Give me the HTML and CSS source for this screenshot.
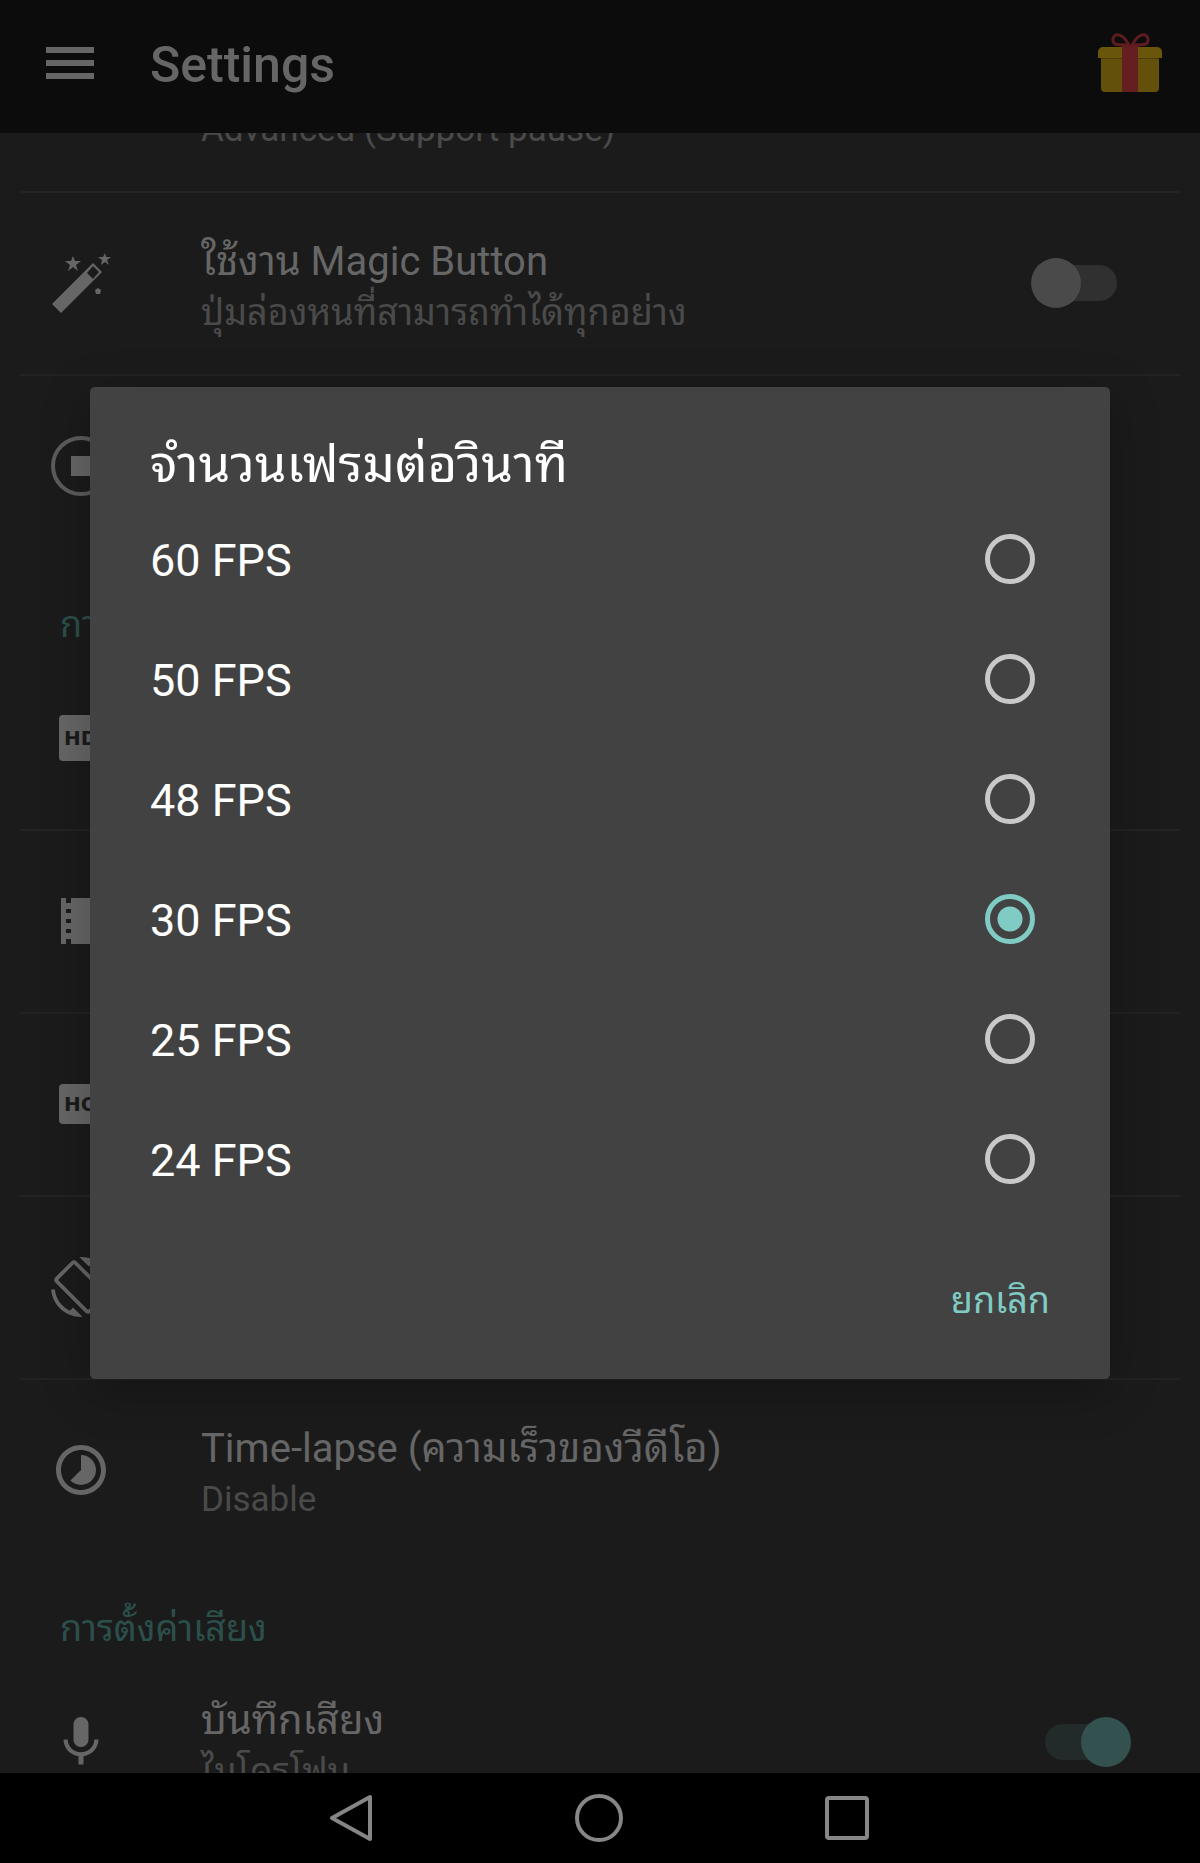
FILE: index.html
```html
<!DOCTYPE html>
<html lang="th">
<head>
<meta charset="utf-8">
<meta name="viewport" content="width=device-width, initial-scale=1">
<title>Settings</title>
<link rel="stylesheet" href="styles.css">
</head>
<body>
<div class="app">
  <header class="app-bar">
    <button class="icon-button" type="button" aria-label="Menu">
      <svg class="icon" viewBox="0 0 60 60"><path d="M6 12h48v6H6zM6 25h48v6H6zM6 38h48v6H6z"/></svg>
    </button>
    <h1 class="app-title">Settings</h1>
    <button class="icon-button gift" type="button" aria-label="Gift">
      <svg class="gift-icon" viewBox="0 0 64 64">
        <g fill="none" stroke="#5e1c1e" stroke-width="3"><path d="M31 12C27 5 22 1 18 2c-4 2-4 7-1 9 3 1 9 1 14 1z"/><path d="M34 12C38 5 43 1 47 2c4 2 4 7 1 9-3 1-9 1-14 1z"/></g>
        <path fill="#63500a" d="M3 24h58v31a4 4 0 0 1-4 4H7a4 4 0 0 1-4-4z"/>
        <path fill="#6a560b" d="M5 14h54a5 5 0 0 1 5 5v6H0v-6a5 5 0 0 1 5-5z"/>
        <path fill="#4b3c08" d="M3 25h58v1H3z"/>
        <path fill="#651f21" d="M24 13h16v46H24z"/>
      </svg>
    </button>
  </header>

  <main class="content">
    <div class="list">
      <div class="row">
        <div class="row-icon"></div>
        <div class="row-text"><span class="row-title"></span><span class="row-summary">Advanced (Support pause)</span></div>
      </div>
      <div class="row">
        <div class="row-icon">
          <svg class="icon" viewBox="0 0 60 60">
            <path d="M42 10l9 9L10 60l-9-9z"/>
            <path fill="#1b1b1b" d="M42 13l6 6-6 7-6-6z"/>
            <path d="M22 3l2 5h6l-5 4 2 6-5-4-5 4 2-6-5-4h6zM54 0l1 4h5l-4 3 2 5-4-3-4 3 1-5-4-3h5zM47 35l3 2-1 4h-4l-1-4z"/>
          </svg>
        </div>
        <label class="row-text" for="magic"><span class="row-title">ใช้งาน Magic Button</span><span class="row-summary thai">ปุ่มล่องหนที่สามารถทำได้ทุกอย่าง</span></label>
        <input class="switch" type="checkbox" role="switch" id="magic">
      </div>
      <div class="row">
        <div class="row-icon">
          <svg class="icon" viewBox="0 0 60 60"><circle cx="30" cy="30" r="28" fill="none" stroke="#5c5c5c" stroke-width="4"/><path d="M20 20h20v20H20z"/></svg>
        </div>
      </div>

      <h2 class="section">การตั้งค่าวีดีโอ</h2>
      <div class="row">
        <div class="row-icon">
          <svg class="icon" viewBox="0 0 60 60"><rect x="8" y="7" width="45" height="46" rx="4"/><text class="badge-text" x="13" y="37">HD</text></svg>
        </div>
      </div>
      <div class="row">
        <div class="row-icon">
          <svg class="icon" viewBox="0 0 60 60"><path d="M10 7h40v46H10z"/><path fill="#1b1b1b" d="M15 7h5v5h-5zM15 18h5v4h-5zM15 28h5v4h-5zM15 38h5v4h-5zM15 48h5v5h-5zM40 7h5v5h-5zM40 18h5v4h-5zM40 28h5v4h-5zM40 38h5v4h-5zM40 48h5v5h-5z"/></svg>
        </div>
      </div>
      <div class="row">
        <div class="row-icon">
          <svg class="icon" viewBox="0 0 60 60"><rect x="8" y="10" width="45" height="40" rx="4"/><text class="badge-text" x="13" y="37">HQ</text></svg>
        </div>
      </div>
      <div class="row">
        <div class="row-icon">
          <svg class="icon" viewBox="0 0 24 24"><path d="M16.48 2.52c3.27 1.55 5.61 4.72 5.97 8.48h1.5C23.44 4.84 18.29 0 12 0l-.66.03 3.81 3.81 1.33-1.32zm-6.25-.77c-.59-.59-1.54-.59-2.12 0L1.75 8.11c-.59.59-.59 1.54 0 2.12l12.02 12.02c.59.59 1.54.59 2.12 0l6.36-6.36c.59-.59.59-1.54 0-2.12L10.23 1.75zm4.6 19.44L2.81 9.17l6.36-6.36 12.02 12.02-6.36 6.36zm-7.31.29C4.25 19.94 1.91 16.76 1.55 13H.05C.56 19.16 5.71 24 12 24l.66-.03-3.81-3.81-1.33 1.32z"/></svg>
        </div>
      </div>
      <div class="row">
        <div class="row-icon">
          <svg class="icon" viewBox="0 0 24 24"><path d="M16.24 7.76C15.07 6.59 13.54 6 12 6v6l-4.24 4.24c2.34 2.34 6.14 2.34 8.49 0 2.34-2.34 2.34-6.14-.01-8.48zM12 2C6.48 2 2 6.48 2 12s4.48 10 10 10 10-4.48 10-10S17.52 2 12 2zm0 18c-4.42 0-8-3.58-8-8s3.58-8 8-8 8 3.58 8 8-3.58 8-8 8z"/></svg>
        </div>
        <div class="row-text"><span class="row-title">Time-lapse (ความเร็วของวีดีโอ)</span><span class="row-summary">Disable</span></div>
      </div>

      <h2 class="section">การตั้งค่าเสียง</h2>
      <div class="row">
        <div class="row-icon">
          <svg class="icon" viewBox="0 0 24 24"><path d="M12 14c1.66 0 2.99-1.34 2.99-3L15 5c0-1.66-1.34-3-3-3S9 3.34 9 5v6c0 1.66 1.34 3 3 3zm5.3-3c0 3-2.54 5.1-5.3 5.1S6.7 14 6.7 11H5c0 3.41 2.72 6.23 6 6.72V21h2v-3.28c3.28-.48 6-3.3 6-6.72h-1.7z"/></svg>
        </div>
        <label class="row-text" for="audio"><span class="row-title">บันทึกเสียง</span><span class="row-summary thai">ไมโครโฟน</span></label>
        <input class="switch" type="checkbox" role="switch" id="audio" checked>
      </div>
    </div>
  </main>

  <div class="overlay">
    <form class="dialog" role="dialog" aria-modal="true" aria-labelledby="fps-title">
      <h2 class="dialog-title" id="fps-title">จำนวนเฟรมต่อวินาที</h2>
      <label class="option"><span class="option-text">60 FPS</span><input class="radio" type="radio" name="fps" value="60"></label>
      <label class="option"><span class="option-text">50 FPS</span><input class="radio" type="radio" name="fps" value="50"></label>
      <label class="option"><span class="option-text">48 FPS</span><input class="radio" type="radio" name="fps" value="48"></label>
      <label class="option"><span class="option-text">30 FPS</span><input class="radio" type="radio" name="fps" value="30" checked></label>
      <label class="option"><span class="option-text">25 FPS</span><input class="radio" type="radio" name="fps" value="25"></label>
      <label class="option"><span class="option-text">24 FPS</span><input class="radio" type="radio" name="fps" value="24"></label>
      <div class="dialog-actions"><button class="text-button" type="button">ยกเลิก</button></div>
    </form>
  </div>
</div>

<nav class="nav-bar" aria-label="System">
  <button class="nav-button" type="button" aria-label="Back"><svg class="nav-icon" viewBox="0 0 50 50"><path d="M43 4v42L5 25z"/></svg></button>
  <button class="nav-button" type="button" aria-label="Home"><svg class="nav-icon" viewBox="0 0 50 50"><circle cx="24" cy="25" r="22"/></svg></button>
  <button class="nav-button" type="button" aria-label="Recent apps"><svg class="nav-icon" viewBox="0 0 50 50"><rect x="4" y="5" width="40" height="40" rx="2"/></svg></button>
</nav>
</body>
</html>
```
FILE: styles.css
```css
* {
  box-sizing: border-box;
}

body {
  margin: 0;
  height: 100vh;
  display: flex;
  flex-direction: column;
  overflow: hidden;
  background: #000;
  color: #666;
  font-family: Roboto, "Noto Sans Thai Looped", "Noto Looped Thai", "Droid Sans Thai", Loma, Garuda, Waree, "Noto Sans Thai", sans-serif;
}

button {
  border: 0;
  padding: 0;
  background: none;
  color: inherit;
  font: inherit;
}

h1,
h2 {
  margin: 0;
}

.app {
  position: relative;
  flex: 1;
  min-height: 0;
  display: flex;
  flex-direction: column;
  background: #1b1b1b;
}

/* App bar */
.app-bar {
  flex: none;
  height: 133px;
  display: flex;
  align-items: center;
  padding: 0 38px 4px 40px;
  background: #0c0c0c;
}

.icon-button {
  display: flex;
}

.icon {
  display: block;
  width: 60px;
  height: 60px;
  fill: #666;
}

.app-title {
  flex: 1;
  padding-left: 50px;
  font-size: 50px;
  line-height: 60px;
  font-weight: 500;
}

.gift-icon {
  display: block;
  width: 64px;
  height: 64px;
}

/* Preference list, scrolled part of the way down */
.content {
  flex: 1;
  min-height: 0;
  overflow: hidden;
}

.list {
  margin-top: -125px;
}

.row {
  display: flex;
  align-items: center;
  height: 183px;
  margin: 0 20px;
  padding: 0 49px 0 31px;
}

.row + .row {
  border-top: 2px solid #232323;
  padding-bottom: 2px;
}

.row-icon {
  flex: none;
  width: 150px;
}

.row-text {
  flex: 1;
  display: flex;
  flex-direction: column;
  padding-top: 8px;
}

.row-title {
  height: 50px;
  font-size: 40px;
  line-height: 50px;
}

.row-summary {
  height: 50px;
  color: #4a4a4a;
  font-size: 35px;
  line-height: 52px;
}

.row-summary.thai {
  font-size: 36px;
}

.badge-text {
  fill: #1b1b1b;
  font: bold 20px "DejaVu Sans", sans-serif;
}

.section {
  height: 89px;
  padding: 44px 60px 0;
  color: #2b4f4b;
  font-size: 36px;
  line-height: 48px;
  font-weight: 400;
}

.switch {
  appearance: none;
  position: relative;
  flex: none;
  display: flex;
  align-items: center;
  width: 100px;
  height: 50px;
  margin: 0;
}

.switch::before {
  content: "";
  width: 72px;
  height: 36px;
  margin: 0 14px;
  border-radius: 18px;
  background: #303030;
}

.switch::after {
  content: "";
  position: absolute;
  left: 0;
  top: 0;
  width: 50px;
  height: 50px;
  border-radius: 50%;
  background: #4a4a4a;
}

.switch:checked::before {
  background: #232b2a;
}

.switch:checked::after {
  left: auto;
  right: 0;
  background: #33514e;
}

/* Frame rate dialog */
.overlay {
  position: absolute;
  inset: 0;
  display: flex;
  align-items: center;
  padding: 0 90px 7px;
}

.dialog {
  flex: 1;
  border-radius: 5px;
  background: #424242;
  color: #fff;
  box-shadow: 0 12px 48px rgba(0, 0, 0, 0.25);
}

.dialog-title {
  padding: 48px 60px 4px;
  font-size: 51px;
  line-height: 60px;
  font-weight: 400;
}

.option {
  display: flex;
  align-items: center;
  justify-content: space-between;
  height: 120px;
  padding: 0 75px 0 60px;
}

.option-text {
  padding-top: 4px;
  font-size: 45px;
  line-height: 60px;
}

.radio {
  appearance: none;
  flex: none;
  width: 50px;
  height: 50px;
  margin: 0;
  border: 5px solid #c8c8c8;
  border-radius: 50%;
}

.radio:checked {
  border-color: #80cbc4;
  background: radial-gradient(circle, #80cbc4 12px, transparent 13px);
}

.dialog-actions {
  display: flex;
  justify-content: flex-end;
  padding: 35px 40px;
}

.text-button {
  height: 90px;
  padding: 4px 20px 0;
  color: #80cbc4;
  font-size: 36px;
  line-height: 48px;
}

/* System navigation */
.nav-bar {
  flex: none;
  display: flex;
  justify-content: center;
  gap: 128px;
  height: 90px;
  background: #000;
}

.nav-button {
  display: flex;
  align-items: center;
  justify-content: center;
  width: 120px;
}

.nav-icon {
  width: 50px;
  height: 50px;
  fill: none;
  stroke: #868686;
  stroke-width: 4;
  stroke-linejoin: round;
}
```
